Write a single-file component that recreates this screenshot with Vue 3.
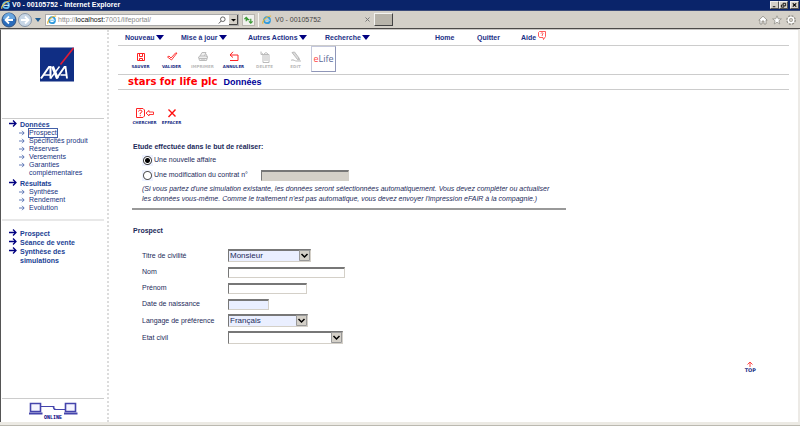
<script setup>
import { ref } from 'vue'

const menus = ['Nouveau', 'Mise à jour', 'Autres Actions', 'Recherche']
const sections = [
  { title: 'Données', items: ['Prospect', 'Spécificités produit', 'Réserves', 'Versements', 'Garanties complémentaires'] },
  { title: 'Résultats', items: ['Synthèse', 'Rendement', 'Evolution'] },
]
const shortcuts = ['Prospect', 'Séance de vente', 'Synthèse des simulations']
const study = ref('new')
const title = ref('Monsieur')
const language = ref('Français')
const status = ref('')
</script>

<template>
  <div class="window">
    <header class="titlebar">
      <svg class="ie" viewBox="0 0 10 10"><circle cx="5" cy="5.2" r="3" fill="none" stroke="#5fb9ee" stroke-width="1.8" /><path d="M3 5.3h5" stroke="#d9f1ff" stroke-width="1.2" /><path d="M1 8.8C-.5 6 6 .2 9.2 1.2" fill="none" stroke="#f2c94c" stroke-width="1.1" /></svg>
      <span class="caption">V0 - 00105752 - Internet Explorer</span>
      <div class="winbtns">
        <button aria-label="Réduire"><svg viewBox="0 0 8 7"><path d="M2 5.5h3" stroke="#000" /></svg></button>
        <button aria-label="Restaurer"><svg viewBox="0 0 8 7"><path d="M3.5 3V1.5h3v3H5M1.500 3.500h3v2.500h-3z" fill="none" stroke="#000" /></svg></button>
        <button class="close" aria-label="Fermer"><svg viewBox="0 0 8 7"><path d="M2 1.500l4 4M6 1.500l-4 4" stroke="#000" stroke-width="1.300" /></svg></button>
      </div>
    </header>

    <div class="toolbar">
      <button class="nav" aria-label="Précédent"><svg viewBox="0 0 16 16"><circle cx="8" cy="8" r="7" fill="#2b6dbb" stroke="#33527d" /><path d="M2 7a6 6 0 0 1 12 0z" fill="#6ba7e0" /><path d="M12 8H5M8 4.500L4.500 8 8 11.500" fill="none" stroke="#fff" stroke-width="1.800" /></svg></button>
      <button class="nav" aria-label="Suivant"><svg viewBox="0 0 16 16"><circle cx="8" cy="8" r="6.500" fill="#c7d6e6" stroke="#8896a8" /><path d="M4 8h7M8 4.500L11.500 8 8 11.500" fill="none" stroke="#fff" stroke-width="1.800" /></svg></button>
      <svg class="drop" viewBox="0 0 6 4"><path d="M0 0h6L3 4z" fill="#1f5d94" /></svg>
      <div class="address">
        <svg class="ie" viewBox="0 0 10 10"><circle cx="5" cy="5.2" r="3" fill="none" stroke="#319bdd" stroke-width="1.8" /><path d="M3 5.300h5" stroke="#8dcdf4" stroke-width="1.200" /><path d="M1 8.800C-.5 6 6 .2 9.200 1.200" fill="none" stroke="#e9b837" stroke-width="1.100" /></svg>
        <span class="url">http://<b>localhost:</b>7001/lifeportal/</span>
        <svg class="search" viewBox="0 0 8 8"><circle cx="4.800" cy="3.200" r="2.300" fill="none" stroke="#555" stroke-width=".9" /><path d="M3.200 5L.8 7.500" stroke="#555" /></svg>
        <svg class="combo" viewBox="0 0 9 10"><path d="M0 0h9v10H0z" fill="#d4d0c8" /><path d="M8.500 0v9.500H0" fill="none" stroke="#444" /><path d="M2 4h5L4.500 6.500z" fill="#000" /></svg>
      </div>
      <button class="refresh" aria-label="Actualiser"><svg viewBox="0 0 12 11"><path d="M3.500 7V2.500M1.500 4.500l2-2 2 2M4 5h3M8.500 4v5M6.500 7l2 2 2-2" fill="none" stroke="#3c9a35" stroke-width="1.300" /></svg></button>
      <div class="tab">
        <svg class="ie" viewBox="0 0 10 10"><circle cx="5" cy="5.200" r="3" fill="none" stroke="#319bdd" stroke-width="1.800" /><path d="M3 5.300h5" stroke="#8dcdf4" stroke-width="1.200" /><path d="M1 8.800C-.5 6 6 .2 9.200 1.200" fill="none" stroke="#e9b837" stroke-width="1.100" /></svg>
        <span>V0 - 00105752</span>
        <svg class="x" viewBox="0 0 5 5"><path d="M.5.5l4 4M4.500.5l-4 4" stroke="#777" /></svg>
      </div>
      <button class="newtab" aria-label="Nouvel onglet"></button>
      <div class="tools">
        <svg viewBox="0 0 10 10"><path d="M.8 5.200L5 1.200l4.200 4H8V9H6V6H4v3H2V5.200z" fill="#fff" stroke="#8b8982" stroke-width=".8" /></svg>
        <svg viewBox="0 0 10 10"><path d="M5 .8l1.200 3h3.200L6.900 5.800l.9 3.200L5 7.200 2.200 9l.9-3.200L.6 3.800h3.200z" fill="#fff" stroke="#8b8982" stroke-width=".7" /></svg>
        <svg viewBox="0 0 10 10"><circle cx="5" cy="5" r="4" fill="none" stroke="#8b8982" stroke-width="1.600" stroke-dasharray="1.900 1.240" /><circle cx="5" cy="5" r="2.700" fill="#d4d0c8" stroke="#fff" stroke-width="1.600" /><circle cx="5" cy="5" r="1.600" fill="none" stroke="#8b8982" stroke-width=".6" /></svg>
      </div>
    </div>

    <div class="frame">
      <aside class="sidebar">
        <div class="brand">
          <svg viewBox="0 0 34 34" role="img" aria-label="AXA"><path d="M0 0h34v34H0z" fill="#102e84" /><path d="M33.500.5L20.500 17" stroke="#e11b35" stroke-width="1.600" /><g fill="none" stroke="#fff"><path d="M1 31L9 19.500h1.500V31" stroke-width="2" /><path d="M4 27.500h7M20.500 27.500h6" stroke-width="1.600" /><path d="M12.500 19l5 12" stroke-width="3" /><path d="M19.500 19L10.500 31" stroke-width="1.400" /><path d="M16.500 31l8-11.500h1L27 31" stroke-width="1.900" /></g></svg>
        </div>
        <nav class="tree">
          <template v-for="s in sections" :key="s.title">
            <a class="head" href="#"><svg class="arrow" viewBox="0 0 8 7"><path d="M0 3.500h7M4 .5l3 3-3 3" fill="none" stroke="#000080" stroke-width="1.300" /></svg><span>{{ s.title }}</span></a>
            <ul>
              <li v-for="(item, i) in s.items" :key="item">
                <svg class="small" viewBox="0 0 6 6"><path d="M0 3h5M3 .8L5.200 3 3 5.200" fill="none" stroke="#3c5aa6" stroke-width=".8" /></svg>
                <a href="#" :class="{ current: s.title === 'Données' && i === 0 }">{{ item }}</a>
              </li>
            </ul>
          </template>
        </nav>
        <nav class="shortcuts">
          <a v-for="s in shortcuts" :key="s" class="head" href="#"><svg class="arrow" viewBox="0 0 8 7"><path d="M0 3.500h7M4 .5l3 3-3 3" fill="none" stroke="#000080" stroke-width="1.300" /></svg><span>{{ s }}</span></a>
        </nav>
        <div class="online">
          <svg viewBox="0 0 50 13"><g fill="none" stroke="#4444ac"><path d="M2.500 1.500h10v8h-10zM37.500 1.500h10v8h-10z" fill="#f4f4ff" stroke-width="1.600" /><path d="M1 11.500h13.500M36 11.500h13.500" stroke-width="2" /><path d="M13 4.500h13v3h11M26 4.500l-1 1.500 3 1.500" stroke-width="1" /></g></svg>
          <span>ONLINE</span>
        </div>
      </aside>

      <main>
        <nav class="menu">
          <button v-for="m in menus" :key="m">{{ m }}<svg viewBox="0 0 8 5"><path d="M0 0h8L4 5z" fill="#000080" /></svg></button>
          <a href="#">Home</a>
          <a href="#">Quitter</a>
          <a href="#">Aide<svg class="help" viewBox="0 0 8 9"><path d="M1.500.5h6v5L5.500 8.500 5 6.500H1.500L.5 5V1.500z" fill="#fff" stroke="#f33" stroke-width=".8" /><path d="M3 2.500c.2-1.200 2.200-1 2 .2L4.200 4v1" fill="none" stroke="#f33" stroke-width=".8" /></svg></a>
        </nav>

        <div class="actions">
          <button><svg viewBox="0 0 12 12"><path d="M2.500 2.500h7v7h-7zM4.500 2.500v3h3v-3M4.500 9.500v-2h3v2" fill="none" stroke="#f22" /></svg>SAUVER</button>
          <button><svg viewBox="0 0 12 12"><path d="M1.500 6l1.500-1 2 2 4.500-5h1.500L5.500 9z" fill="none" stroke="#f22" stroke-width=".9" /></svg>VALIDER</button>
          <button disabled><svg viewBox="0 0 12 12"><path d="M3 5l2-3.500h4L7.500 5M1.500 6L3 5h6l1.500 1-1 3.500h-7zM2 7.500h8M4 9h4M9 3l1.500 3" fill="#eee" stroke="#bbb" /></svg>IMPRIMER</button>
          <button><svg viewBox="0 0 12 12"><path d="M5 .8L2 4l3 2.500M2 4h8v5.500H2" fill="none" stroke="#f22" /></svg>ANNULER</button>
          <button disabled><svg viewBox="0 0 12 12"><path d="M2 .5v3h3M2.500 2L5 4M5 3l2-1.500L9 3M4 3.500h6v8H4zM5 5h4M6 6v4M8 6v4" fill="none" stroke="#bbb" /></svg>DELETE</button>
          <button disabled><svg viewBox="0 0 12 12"><path d="M2 1.500L4.500 1l4.500 6-1.500 1.500zM7.500 8.500l2 .5L9 7M1 9.500c2-2 4 1 6 .5h4" fill="#ddd" stroke="#bbb" /></svg>EDIT</button>
          <button class="elife"><i>e</i>Life</button>
        </div>

        <div class="heading"><strong>stars for life plc</strong><h1>Données</h1></div>

        <div class="local">
          <button><svg viewBox="0 0 19 11"><path d="M1.500.5H8L9.500 2v6L8 9.500H1.500z" fill="none" stroke="#f22" /><path d="M3.500 3.500c.3-2 4-1.700 3.500.3L5.300 5v1.200M5.300 7.200v1" fill="none" stroke="#f22" /><path d="M11 5l3-2.500V4h4.500v2.500H14V8z" fill="none" stroke="#f22" stroke-width=".9" /></svg>CHERCHER</button>
          <button><svg viewBox="0 0 19 11"><path d="M6.500 1.500l7 7M13.500 1.500l-7 7.500" stroke="#f11" stroke-width="1.400" /></svg>EFFACER</button>
        </div>

        <form @submit.prevent>
          <section class="study">
            <h2>Etude effectuée dans le but de réaliser:</h2>
            <label class="option"><input v-model="study" type="radio" value="new"><span>Une nouvelle affaire</span></label>
            <div class="change">
              <label class="option"><input v-model="study" type="radio" value="change"><span>Une modification du contrat n°</span></label>
              <input class="field contract" aria-label="Numéro de contrat" disabled>
            </div>
            <p>(Si vous partez d'une simulation existante, les données seront sélectionnées automatiquement. Vous devez compléter ou actualiser<br>les données vous-même. Comme le traitement n'est pas automatique, vous devez envoyer l'impression eFAIR à la compagnie.)</p>
          </section>

          <section class="person">
            <h2>Prospect</h2>
            <div class="fields">
              <label for="title">Titre de civilité</label>
              <div class="pick w-title"><select id="title" v-model="title" class="required"><option>Monsieur</option><option>Madame</option></select><svg viewBox="0 0 11 11"><path d="M.5.5h10v10H.5z" fill="#d4d0c8" stroke="#999" /><path d="M2.500 4l3 3 3-3" fill="none" stroke="#000" stroke-width="1.500" /></svg></div>
              <label for="name">Nom</label>
              <input id="name" class="field w-name">
              <label for="first">Prénom</label>
              <input id="first" class="field w-first">
              <label for="birth">Date de naissance</label>
              <input id="birth" class="field required w-birth">
              <label for="lang">Langage de préférence</label>
              <div class="pick w-lang"><select id="lang" v-model="language" class="required"><option>Français</option><option>Nederlands</option></select><svg viewBox="0 0 11 11"><path d="M.5.5h10v10H.5z" fill="#d4d0c8" stroke="#999" /><path d="M2.500 4l3 3 3-3" fill="none" stroke="#000" stroke-width="1.500" /></svg></div>
              <label for="status">Etat civil</label>
              <div class="pick w-status"><select id="status" v-model="status"><option value=""></option></select><svg viewBox="0 0 11 11"><path d="M.5.5h10v10H.5z" fill="#d4d0c8" stroke="#999" /><path d="M2.500 4l3 3 3-3" fill="none" stroke="#000" stroke-width="1.500" /></svg></div>
            </div>
          </section>
        </form>

        <a class="top" href="#"><svg viewBox="0 0 8 6"><path d="M4 6V1M1.500 3.500L4 1l2.500 2.500" fill="none" stroke="#f44" /></svg>TOP</a>
      </main>
    </div>
    <footer></footer>
  </div>
</template>

<style>
body { margin: 0; background: #fff; }
</style>

<style scoped>
* { box-sizing: border-box; }
.window { min-height: 100vh; display: flex; flex-direction: column; font: 7px/8px "Liberation Sans", Arial, sans-serif; color: #1c2a5a; }
svg { display: block; flex: none; }
button { border: 0; padding: 0; margin: 0; background: none; font: inherit; color: inherit; }
a { color: inherit; text-decoration: none; }
h1, h2, p, ul { margin: 0; padding: 0; list-style: none; }
.ie { width: 10px; height: 10px; }

.titlebar { height: 11px; background: #0a246a; color: #fff; display: flex; align-items: center; gap: 1px; padding: 0 1px; border-bottom: 1px solid #3a4a78; font-weight: bold; }
.caption { flex: 1; }
.winbtns { display: flex; }
.winbtns button { width: 9px; height: 8px; background: #d4d0c8; border: 1px solid #eee; border-right-color: #555; border-bottom-color: #555; }
.winbtns .close { margin-left: 2px; }
.winbtns svg { width: 7px; height: 6px; }

.toolbar { height: 18px; background: #d4d0c8; border-bottom: 1px solid #4c4a48; display: flex; align-items: center; padding: 0 4px 0 1px; }
.nav svg { width: 16px; height: 16px; }
.drop { width: 6px; height: 4px; margin: 0 4px 0 2px; }
.address { width: 194px; height: 12px; background: #fff; border: 1px solid #aaa; display: flex; align-items: center; gap: 1px; padding: 0 0 0 1px; color: #888; }
.url { flex: 1; }
.url b { font-weight: normal; color: #111; }
.search { width: 8px; height: 8px; margin-right: 2px; }
.combo { width: 9px; height: 10px; }
.refresh { width: 13px; height: 12px; margin: 0 3px; background: #f1f1ee; border: 1px solid #b9b6b0; }
.refresh svg { width: 11px; height: 10px; }
.tab { width: 115px; height: 14px; border-left: 1px solid #f5f5f2; display: flex; align-items: center; gap: 3px; padding: 0 3px; color: #444; }
.tab span { flex: 1; }
.x { width: 5px; height: 5px; }
.newtab { width: 19px; height: 13px; background: #b8b4aa; border: 1px solid #f3f3f0; border-right: 1px solid #444; border-bottom: 1px solid #444; margin-left: 1px; }
.tools { margin-left: auto; display: flex; gap: 4px; }
.tools svg { width: 10px; height: 10px; }

.frame { flex: 1; display: flex; border-top: 1px solid #c9c7c4; border-left: 1px solid #555; border-right: 2px solid #eceae6; }
.sidebar { width: 108px; flex: none; display: flex; flex-direction: column; padding: 17px 3px 0 1px; border-right: 2px dotted #dcdcdc; color: #17337f; }
.brand { height: 72px; border-bottom: 1px solid #ccc; padding-left: 38px; }
.brand svg { width: 34px; height: 35px; }
.tree { padding: 1px 0 5px 7px; border-bottom: 2px solid #e8e8e8; }
.head { display: flex; gap: 3px; font-weight: bold; line-height: 9px; color: #1b3f94; }
.arrow { width: 8px; height: 7px; }
.tree ul { padding: 0 0 2px 10px; }
.tree li { display: flex; gap: 4px; line-height: 8px; }
.small { width: 6px; height: 6px; margin-top: 1px; }
.current { outline: 1px solid #4460a8; }
.shortcuts { padding: 8px 25px 0 7px; }
.online { margin-top: auto; border-top: 1px solid #ccc; display: flex; flex-direction: column; align-items: center; padding-top: 3px; color: #000080; font: bold 5px/7px "Liberation Mono", monospace; }
.online svg { width: 50px; height: 13px; }

main { flex: 1; min-width: 0; display: flex; flex-direction: column; padding: 0 9px 0 9px; }
.menu { height: 16px; border-bottom: 1px solid #ccc; display: grid; grid-template-columns: 56px 67px 77px 110px 42px 44px auto; align-items: center; padding-left: 7px; font-weight: bold; color: #1b2f86; }
.menu button, .menu a { display: flex; align-items: center; gap: 1px; }
.menu button svg { width: 8px; height: 5px; }
.menu .help { width: 8px; height: 9px; margin: 0 0 4px 1px; }
.menu a { height: 8px; }
.actions { height: 29px; border-bottom: 1px solid #ccc; display: flex; align-items: flex-start; padding-left: 7px; }
.actions button, .local button { width: 31px; display: flex; flex-direction: column; align-items: center; gap: 1px; padding-top: 5px; font: bold 4px/5px "DejaVu Sans", sans-serif; color: #1b2f86; }
.actions button:disabled { color: #bbb; }
.actions svg { width: 12px; height: 12px; }
.actions .elife { width: 25px; height: 26px; display: block; padding: 0; border: 1px solid #c4c8dc; border-right-color: #8f96b8; border-bottom-color: #8f96b8; font: 9px/22px "Open Sans", sans-serif; color: #5b6896; }
.elife i { font-style: normal; color: #f44; }
.heading { height: 15px; border-bottom: 1px solid #ccc; display: flex; align-items: center; gap: 6px; padding-left: 10px; }
.heading strong { font: bold 10px/14px "DejaVu Sans", sans-serif; color: #f00; }
.heading h1 { font-size: 9px; line-height: 14px; color: #000099; }
.local { display: flex; padding: 13px 0 0 13px; }
.local button { width: 27px; }
.local svg { width: 19px; height: 11px; }

form { padding: 18px 0 0 14px; }
h2 { font-size: 7px; line-height: 8px; padding-left: 1px; }
.study { max-width: 434px; border-bottom: 2px solid #999; padding-bottom: 4px; }
.option { display: flex; align-items: center; gap: 1px; width: max-content; height: 12px; margin-left: 10px; }
.option input { width: 11px; height: 11px; margin: 0; appearance: none; background: radial-gradient(circle, #fff 3px, #555 4px, #eef2ff 5px); }
.option input:checked { background: radial-gradient(circle, #000 2px, #fff 3px, #444 4px, #eef2ff 5px); }
.study > .option { margin-top: 3px; }
.change { display: flex; align-items: center; gap: 13px; margin-top: 3px; }
.study p { font-style: italic; line-height: 10px; margin: 3px 0 0 10px; white-space: nowrap; }
.field { height: 11px; border: 1px solid #777; border-top-width: 2px; border-right-color: #d4d0c8; border-bottom-color: #d4d0c8; padding: 0 2px; background: #fff; font: 8px "Liberation Sans", Arial, sans-serif; }
.contract { width: 88px; background: #d4d0c8; }
.field.required { background: #eaefff; }
.person { padding-top: 17px; }
.fields { display: grid; grid-template-columns: 86px auto; grid-template-rows: 13px 12px 12px 12px 13px 13px; row-gap: 4px; align-items: center; padding: 14px 0 0 10px; }
.required { background: #eaefff; }
.pick { display: grid; height: 13px; }
.pick > * { grid-area: 1 / 1; }
.pick select { appearance: none; border: 1px solid #777; border-top-width: 2px; border-right-color: #d4d0c8; border-bottom-color: #d4d0c8; border-radius: 0; padding: 0 12px 0 1px; margin: 0; height: 13px; font: 8px/10px "Liberation Sans", Arial, sans-serif; color: #1c2a5a; }
.pick select:not(.required) { background: #fff; }
.pick svg { width: 11px; height: 11px; justify-self: end; align-self: center; margin-right: 1px; pointer-events: none; }
.w-title { width: 83px; }
.w-name { width: 117px; }
.w-first { width: 79px; }
.w-birth { width: 41px; }
.w-lang { width: 80px; }
.w-status { width: 115px; }
.top { align-self: flex-end; display: flex; flex-direction: column; align-items: center; gap: 1px; margin: 17px 33px 0 0; font: bold 5px/5px "DejaVu Sans", sans-serif; color: #1b2f86; }
.top svg { width: 8px; height: 6px; }
footer { height: 4px; background: #eceae4; border-bottom: 1px solid #bbb9b0; }
</style>
